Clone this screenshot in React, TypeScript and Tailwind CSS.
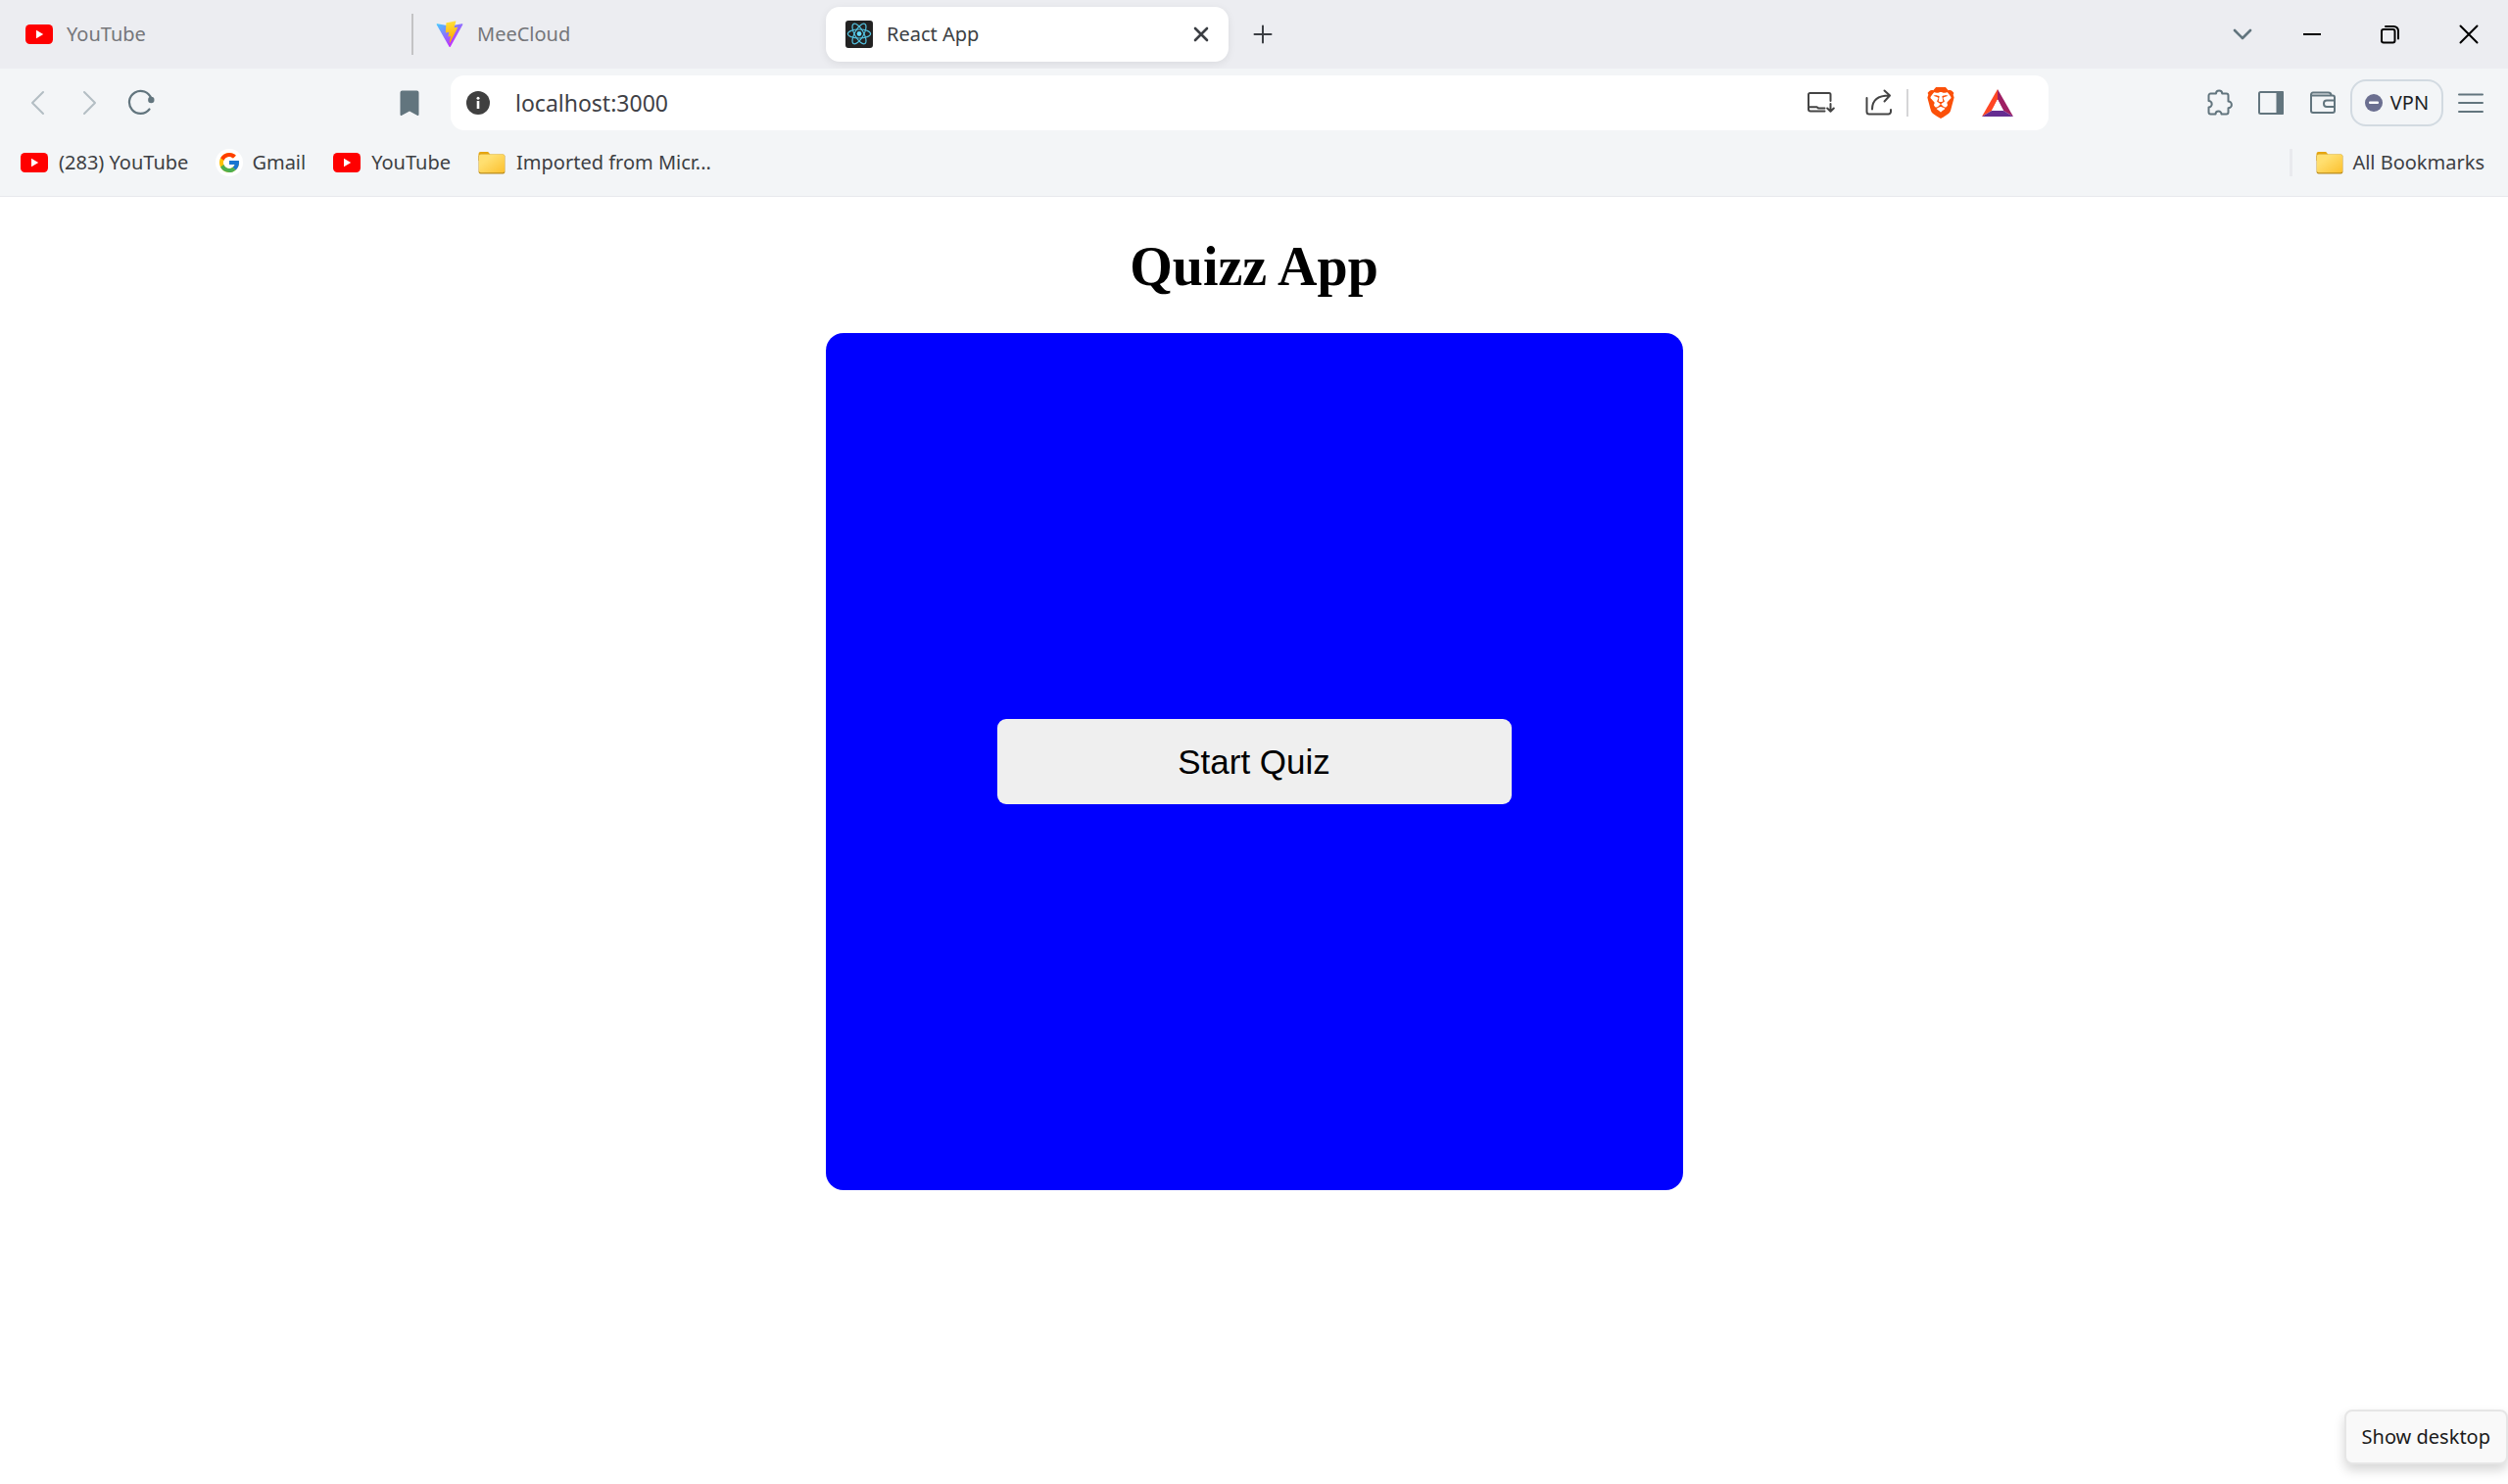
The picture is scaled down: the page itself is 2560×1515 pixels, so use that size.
import React from "react";
import { FcGoogle } from "react-icons/fc";
import { SiBrave } from "react-icons/si";

function YouTubeIcon() {
  return (
    <svg className="h-5 w-7 shrink-0" viewBox="0 0 28 20" aria-hidden="true">
      <rect width="28" height="20" rx="4.5" fill="#ff0000" />
      <path d="M11 5.8v8.4l7.2-4.2z" fill="#fff" />
    </svg>
  );
}

function ViteIcon() {
  return (
    <svg className="size-7 shrink-0" viewBox="0 0 410 404" fill="none" aria-hidden="true">
      <path
        d="M399.641 59.5246L215.643 388.545C211.844 395.338 202.084 395.378 198.228 388.618L10.5817 59.5563C6.38087 52.1896 12.6802 43.2665 21.0281 44.7586L205.223 77.6824C206.398 77.8924 207.601 77.8904 208.776 77.6763L389.119 44.8058C397.439 43.2894 403.768 52.1434 399.641 59.5246Z"
        fill="url(#viteShield)"
      />
      <path
        d="M292.965 1.5744L156.801 28.2552C154.563 28.6937 152.906 30.5903 152.771 32.8664L144.395 174.33C144.198 177.662 147.258 180.248 150.51 179.498L188.42 170.749C191.967 169.931 195.172 173.055 194.443 176.622L183.18 231.775C182.422 235.487 185.907 238.661 189.532 237.56L212.947 230.446C216.577 229.344 220.065 232.527 219.297 236.242L201.398 322.875C200.278 328.294 207.486 331.249 210.492 326.603L212.5 323.5L323.454 102.072C325.312 98.3645 322.108 94.137 318.036 94.9228L279.014 102.454C275.347 103.161 272.227 99.746 273.262 96.1583L298.731 7.86689C299.767 4.27314 296.636 0.855181 292.965 1.5744Z"
        fill="url(#viteBolt)"
      />
      <defs>
        <linearGradient id="viteShield" x1="6" y1="33" x2="235" y2="344" gradientUnits="userSpaceOnUse">
          <stop stopColor="#41D1FF" />
          <stop offset="1" stopColor="#BD34FE" />
        </linearGradient>
        <linearGradient id="viteBolt" x1="194.651" y1="8.818" x2="236.076" y2="292.989" gradientUnits="userSpaceOnUse">
          <stop stopColor="#FFEA83" />
          <stop offset="0.0833" stopColor="#FFDD35" />
          <stop offset="1" stopColor="#FFA800" />
        </linearGradient>
      </defs>
    </svg>
  );
}

function ReactIcon() {
  return (
    <svg className="size-7 shrink-0" viewBox="0 0 28 28" fill="none" aria-hidden="true">
      <rect width="28" height="28" rx="3" fill="#222" />
      <g stroke="#53c1de" strokeWidth="1.2">
        <ellipse cx="14" cy="13.5" rx="11.6" ry="4.5" />
        <ellipse cx="14" cy="13.5" rx="11.6" ry="4.5" transform="rotate(60 14 13.5)" />
        <ellipse cx="14" cy="13.5" rx="11.6" ry="4.5" transform="rotate(120 14 13.5)" />
      </g>
      <circle cx="14" cy="13.5" r="2.4" fill="#61dafb" />
    </svg>
  );
}

function FolderIcon() {
  return (
    <svg className="size-7 shrink-0" viewBox="0 0 28 28" aria-hidden="true">
      <defs>
        <linearGradient id="folderFront" x1="0" y1="0" x2="1" y2="1">
          <stop offset="0.3" stopColor="#ffdf70" />
          <stop offset="1" stopColor="#fcc02e" />
        </linearGradient>
      </defs>
      <path d="M0.5 5a2 2 0 0 1 2-2h6.6c1 0 1.5 .4 2 1l1.4 2H24v6H.5z" fill="#e5a50f" />
      <rect x="0.6" y="5.5" width="26.8" height="19.9" rx="2" fill="#b98c1d" />
      <rect x="0.9" y="5.5" width="26.2" height="18.8" rx="2" fill="url(#folderFront)" />
    </svg>
  );
}

function LineIcon({ children, className = "text-[#62757e]" }: { children: React.ReactNode; className?: string }) {
  return (
    <svg
      className={`size-7 shrink-0 ${className}`}
      viewBox="0 0 28 28"
      fill="none"
      stroke="currentColor"
      strokeWidth="2"
      strokeLinecap="round"
      strokeLinejoin="round"
      aria-hidden="true"
    >
      {children}
    </svg>
  );
}

function IconButton({ label, className = "", children }: { label: string; className?: string; children: React.ReactNode }) {
  return (
    <button type="button" aria-label={label} className={`flex h-14 shrink-0 items-center justify-center ${className}`}>
      {children}
    </button>
  );
}

function TabStrip() {
  return (
    <header className="flex h-[70px] items-center bg-[#ecedf1]">
      <div role="tablist" aria-label="Open tabs" className="flex items-center text-xl text-[#75767a]">
        <button role="tab" aria-selected="false" className="flex h-[42px] w-[422px] items-center gap-3.5 border-r-2 border-[#c3c3c5] pl-[26px]">
          <YouTubeIcon />
          YouTube
        </button>
        <button role="tab" aria-selected="false" className="flex h-[42px] w-[421px] items-center gap-3.5 pl-[23px]">
          <ViteIcon />
          MeeCloud
        </button>
        <div className="flex h-14 w-[411px] items-center rounded-[14px] bg-white pr-3.5 pl-5 text-[#3c3f44] shadow-[0_2px_8px_rgba(0,0,0,0.08)]">
          <button role="tab" aria-selected="true" className="flex h-full flex-1 items-center gap-3.5">
            <ReactIcon />
            React App
          </button>
          <IconButton label="Close tab">
            <LineIcon className="text-[#3b3e43]">
              <path d="M8 8l12 12M20 8L8 20" strokeWidth="2.6" />
            </LineIcon>
          </IconButton>
        </div>
      </div>
      <IconButton label="New tab" className="ml-[21px]">
        <LineIcon className="text-[#3b3e43]">
          <path d="M5.500 14h17M14 5.500v17" />
        </LineIcon>
      </IconButton>
      <div className="ml-auto flex items-center">
        <IconButton label="Search tabs" className="w-[62px]">
          <LineIcon>
            <path d="M6 10l8 8 8-8" strokeWidth="2.6" />
          </LineIcon>
        </IconButton>
        <IconButton label="Minimize" className="w-20">
          <LineIcon className="text-black">
            <path d="M5 14h18" strokeLinecap="butt" />
          </LineIcon>
        </IconButton>
        <IconButton label="Restore" className="w-20">
          <LineIcon className="text-black">
            <rect x="5" y="9" width="13.5" height="13.5" rx="2" />
            <path d="M9 6H17.500a4.500 4.500 0 0 1 4.500 4.500V18.500" />
          </LineIcon>
        </IconButton>
        <IconButton label="Close window" className="w-20">
          <LineIcon className="text-black">
            <path d="M5.500 5.500l17 17M22.500 5.500l-17 17" />
          </LineIcon>
        </IconButton>
      </div>
    </header>
  );
}

function AddressBar() {
  return (
    <div className="ml-[18px] flex h-14 flex-1 items-center rounded-[14px] bg-white pr-9 pl-3.5">
      <IconButton label="View site information">
        <svg className="size-7" viewBox="0 0 28 28" aria-hidden="true">
          <circle cx="14" cy="14" r="12" fill="#404040" />
          <circle cx="14" cy="9.2" r="1.5" fill="#fff" />
          <rect x="12.7" y="12" width="2.6" height="8" fill="#fff" />
        </svg>
      </IconButton>
      <input
        type="text"
        aria-label="Address"
        defaultValue="localhost:3000"
        className="ml-6 h-full min-w-0 flex-1 bg-transparent text-[23px] text-[#3f4146] outline-none"
      />
      <IconButton label="Install app">
        <LineIcon className="text-[#444]">
          <path d="M23.500 12V5.500a1.500 1.500 0 0 0-1.500-1.500H2.500A1.500 1.500 0 0 0 1 5.500V17.500M1 18.200h8.500l1.500 1.200h6.500M1 18.200v2.300a2 2 0 0 0 2 2h14.500M23.500 15v7.500M20.200 19.500l3.300 3.300 3.300-3.300" />
        </LineIcon>
      </IconButton>
      <IconButton label="Share" className="ml-[31px]">
        <LineIcon className="text-[#444]">
          <path d="M1.500 9v14a2.500 2.500 0 0 0 2.500 2.500H23.500a2.500 2.500 0 0 0 2.500-2.500v-2M7 20.500C7 12 12 6.500 24.500 6.500M19.500 1.500l5.500 5-5.500 6" />
        </LineIcon>
      </IconButton>
      <span className="ml-3.5 h-7 w-0.5 bg-[#d5d5d7]" />
      <IconButton label="Brave Shields" className="ml-[17px]">
        <SiBrave className="size-8 text-[#fb5009]" aria-hidden="true" />
      </IconButton>
      <IconButton label="Brave Rewards" className="ml-[26px]">
        <svg className="h-7 w-8" viewBox="0 0 32 28" aria-hidden="true">
          <path d="M16 0v10.500L10 22 0 28z" fill="#ff4724" />
          <path d="M16 0v10.500L22 22l10 6z" fill="#9e1f63" />
          <path d="M0 28l10-6h12l10 6z" fill="#662d91" />
          <path d="M16 10.500L10 22h12z" fill="#fff" />
        </svg>
      </IconButton>
    </div>
  );
}

function Toolbar() {
  return (
    <nav aria-label="Navigation" className="flex h-[70px] items-center">
      <IconButton label="Back" className="ml-6">
        <LineIcon className="text-[#b3bec4]">
          <path d="M20 3L9 14l11 11" />
        </LineIcon>
      </IconButton>
      <IconButton label="Forward" className="ml-[25px]">
        <LineIcon className="text-[#b3bec4]">
          <path d="M9 3l11 11L9 25" />
        </LineIcon>
      </IconButton>
      <IconButton label="Reload" className="ml-[25px]">
        <LineIcon>
          <path d="M22.500 20.500A11.500 11.500 0 1 1 24.300 9.500" strokeWidth="2.2" />
          <circle cx="24.3" cy="11" r="3.2" fill="currentColor" stroke="none" />
        </LineIcon>
      </IconButton>
      <IconButton label="Bookmark this tab" className="ml-[246px]">
        <LineIcon>
          <path d="M4.500 3.500a2 2 0 0 1 2-2h15a2 2 0 0 1 2 2V26a1 1 0 0 1-1.700.7L14 22.500l-7.800 4.200A1 1 0 0 1 4.500 26z" fill="currentColor" stroke="none" />
        </LineIcon>
      </IconButton>
      <span className="w-2.5" />
      <AddressBar />
      <div className="ml-[161px] flex items-center pr-6">
        <IconButton label="Extensions">
          <LineIcon>
            <path d="M4.500 4.500H10a3.100 3.100 0 0 1 6.200 0H20.500a2 2 0 0 1 2 2V12.500a3.400 3.400 0 0 1 0 6.800V23.500a2 2 0 0 1-2 2H15.500a3 3 0 0 0-6 0H4.500a2 2 0 0 1-2-2V18.500a3.200 3.200 0 0 0 0-6.400V6.500a2 2 0 0 1 2-2z" />
          </LineIcon>
        </IconButton>
        <IconButton label="Side panel" className="ml-6">
          <LineIcon>
            <rect x="2" y="3" width="24" height="22" rx="1.5" />
            <path d="M20.500 3h5.500v22h-5.500z" fill="currentColor" />
          </LineIcon>
        </IconButton>
        <IconButton label="Wallet" className="ml-[25px]">
          <LineIcon>
            <path d="M2 6.500h22a2 2 0 0 1 2 2V22a2 2 0 0 1-2 2H4a2 2 0 0 1-2-2V5.500A2 2 0 0 1 4 3.500H19.500a3 3 0 0 1 3 3M26 11.500H18a3 3 0 0 0-3 3V15a3 3 0 0 0 3 3H26" />
          </LineIcon>
        </IconButton>
        <button type="button" className="ml-3.5 flex h-12 w-[95px] items-center justify-center gap-2 rounded-2xl border-2 border-[#d2dae1] text-xl text-[#1d1f25]">
          <svg className="size-[18px] shrink-0" viewBox="0 0 18 18" aria-hidden="true">
            <circle cx="9" cy="9" r="9" fill="#6b6f90" />
            <rect x="4" y="7.5" width="10" height="2.5" rx="1" fill="#fff" />
          </svg>
          VPN
        </button>
        <IconButton label="Main menu" className="ml-3.5">
          <LineIcon>
            <path d="M2 5.500h24M2 14h24M2 23h24" />
          </LineIcon>
        </IconButton>
      </div>
    </nav>
  );
}

function Bookmark({ label, icon, className = "" }: { label: string; icon: React.ReactNode; className?: string }) {
  return (
    <a href="#" className={`flex items-center ${className}`}>
      {icon}
      {label}
    </a>
  );
}

function BookmarksBar() {
  return (
    <nav aria-label="Bookmarks" className="flex h-[61px] items-center border-b border-[#e8e9ed] pr-6 pb-2 pl-[21px] text-xl text-[#3d3f43]">
      <Bookmark label="(283) YouTube" icon={<YouTubeIcon />} className="gap-[11px]" />
      <Bookmark
        label="Gmail"
        className="ml-7 gap-[9px]"
        icon={
          <span className="flex size-7 items-center justify-center rounded-full bg-white">
            <FcGoogle className="size-6" aria-hidden="true" />
          </span>
        }
      />
      <Bookmark label="YouTube" icon={<YouTubeIcon />} className="ml-7 gap-[11px]" />
      <Bookmark label="Imported from Micr..." icon={<FolderIcon />} className="ml-7 gap-[11px]" />
      <span className="ml-auto h-7 w-[3px] bg-[#e9eaee]" />
      <Bookmark label="All Bookmarks" icon={<FolderIcon />} className="ml-6 gap-[9px]" />
    </nav>
  );
}

export default function App() {
  return (
    <div className="relative flex min-h-screen flex-col bg-white font-['Noto_Sans',sans-serif]">
      <TabStrip />
      <div className="bg-[#f3f5f7]">
        <Toolbar />
        <BookmarksBar />
      </div>
      <main className="flex flex-1 flex-col items-center pt-[39px]">
        <h1 className="font-['Liberation_Serif',serif] text-[56px] leading-[64px] font-bold text-black">Quizz App</h1>
        <section className="mt-9 flex aspect-square w-full max-w-[875px] items-center justify-center rounded-[18px] bg-[#0000ff]">
          <button type="button" className="w-3/5 rounded-[9px] bg-[#efefef] py-6 font-['Liberation_Sans',sans-serif] text-[35px] leading-[39px] text-black">
            Start Quiz
          </button>
        </section>
      </main>
      <div role="tooltip" className="absolute right-0 bottom-5 rounded-lg border-2 border-[#e6e6e6] bg-[#f9f9f9] px-4 py-3 text-xl text-[#1b1b1b] shadow-[0_6px_12px_rgba(0,0,0,0.16)]">
        Show desktop
      </div>
    </div>
  );
}
